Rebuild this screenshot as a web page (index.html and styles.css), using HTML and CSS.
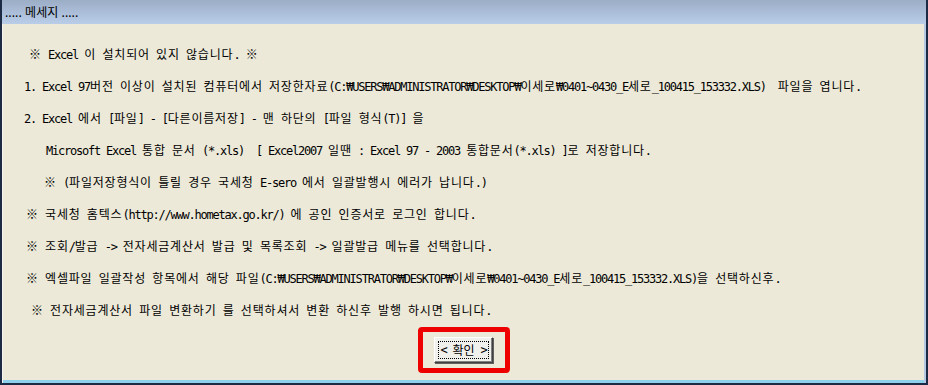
FILE: index.html
```html
<!DOCTYPE html>
<html lang="ko">
<head>
<meta charset="utf-8">
<title>메세지</title>
<link rel="stylesheet" href="styles.css">
</head>
<body>
<div class="window">
  <div class="titlebar">..... 메세지 .....</div>
  <div class="content">
    <div class="lines">
      <div class="row r1">※ <span class="en">Excel</span> 이 설치되어 있지 않습니다<span class="en">.</span> ※</div>
      <div class="row r2"><span class="en">1. Excel 97</span>버전 이상이 설치된 컴퓨터에서 저장한자료<span class="en">(C:₩USERS₩ADMINISTRATOR₩DESKTOP₩</span>이세로<span class="en">₩0401~0430_E</span>세로<span class="en">_100415_153332.XLS)  </span>파일을 엽니다<span class="en">.</span></div>
      <div class="row r3"><span class="en">2. Excel </span>에서 <span class="en">[</span>파일<span class="en">] - [</span>다른이름저장<span class="en">] - </span>맨 하단의 <span class="en">[</span>파일 형식<span class="en">(T)] </span>을</div>
      <div class="row r4"><span class="en">Microsoft Excel </span>통합 문서 <span class="en">(*.xls)  [ Excel2007 </span>일땐 <span class="en">: Excel 97 - 2003 </span>통합문서<span class="en">(*.xls) ]</span>로 저장합니다<span class="en">.</span></div>
      <div class="row r5">※ <span class="en">(</span>파일저장형식이 틀릴 경우 국세청 <span class="en">E-sero </span>에서 일괄발행시 에러가 납니다<span class="en">.)</span></div>
      <div class="row r6">※ 국세청 홈텍스<span class="en">(http://www.hometax.go.kr/) </span>에 공인 인증서로 로그인 합니다<span class="en">.</span></div>
      <div class="row r7">※ 조회<span class="en">/</span>발급 <span class="en">-&gt; </span>전자세금계산서 발급 및 목록조회 <span class="en">-&gt; </span>일괄발급 메뉴를 선택합니다<span class="en">.</span></div>
      <div class="row r8">※ 엑셀파일 일괄작성 항목에서 해당 파일<span class="en">(C:₩USERS₩ADMINISTRATOR₩DESKTOP₩</span>이세로<span class="en">₩0401~0430_E</span>세로<span class="en">_100415_153332.XLS)</span>을 선택하신후<span class="en">.</span></div>
      <div class="row r9">※ 전자세금계산서 파일 변환하기 를 선택하셔서 변환 하신후 발행 하시면 됩니다<span class="en">.</span></div>
    </div>
    <div class="actions">
      <div class="highlight">
        <button class="btn" type="button"><span class="focus"><span class="en">&lt; </span>확인<span class="en"> &gt;</span></span></button>
      </div>
    </div>
  </div>
</div>
</body>
</html>
```

FILE: styles.css
```css
html, body {
  margin: 0;
  padding: 0;
}
body {
  width: 928px;
  height: 385px;
  overflow: hidden;
  background: #ece9d8;
  font-family: "Noto Sans CJK KR", "Noto Sans", sans-serif;
  font-size: 12px;
  color: #000;
}
.window {
  box-sizing: border-box;
  width: 928px;
  height: 385px;
  display: flex;
  flex-direction: column;
  border-left: 2px solid #1c2a44;
  border-right: 2px solid #1c2a44;
  border-bottom: 2px solid #1c2a44;
  background: #ece9d8;
  box-shadow: inset 1px 0 0 #f4f4f0, inset -2px 0 0 #b4c8e4, inset 0 -3px 0 #8fd0ec;
}
.titlebar {
  height: 24px;
  line-height: 24px;
  padding-left: 3px;
  background: linear-gradient(#9cadc6, #b9cde9);
  white-space: pre;
}
.content {
  flex: 1;
  display: flex;
  flex-direction: column;
  padding: 14px 0 0 22px;
}
.lines {
  display: flex;
  flex-direction: column;
}
.row {
  height: 32px;
  line-height: 32px;
  white-space: pre;
  word-spacing: 2.1px;
  letter-spacing: 0.8px;
}
.en {
  font-family: "DejaVu Sans Mono", "Liberation Mono", monospace;
  font-size: 12px;
  letter-spacing: -1.22px;
  word-spacing: 0;
}
.r1 { padding-left: 5px; }
.r2, .r3 { padding-left: 0; }
.r4 { padding-left: 22px; }
.r5 { padding-left: 20px; }
.r6, .r7, .r8 { padding-left: 2px; }
.r9 { padding-left: 7px; }
.actions {
  display: flex;
  padding-left: 394px;
  padding-top: 1px;
}
.highlight {
  border: 5px solid #ee0000;
  border-radius: 4px;
  padding: 5px 12px 5px 11px;
  display: flex;
}
.btn {
  box-sizing: border-box;
  width: 59px;
  height: 26px;
  padding: 3px;
  margin: 0;
  background: #f0f0ec;
  border: 1px solid;
  border-color: #ffffff #404040 #404040 #ffffff;
  box-shadow: inset -1px -1px 0 #808080, 1px 1px 0 #606060;
  font: inherit;
  display: flex;
}
.focus {
  flex: 1;
  border: 1px dotted #000;
  display: flex;
  align-items: center;
  justify-content: center;
  line-height: 1;
  white-space: pre;
  word-spacing: 2px;
}
```
